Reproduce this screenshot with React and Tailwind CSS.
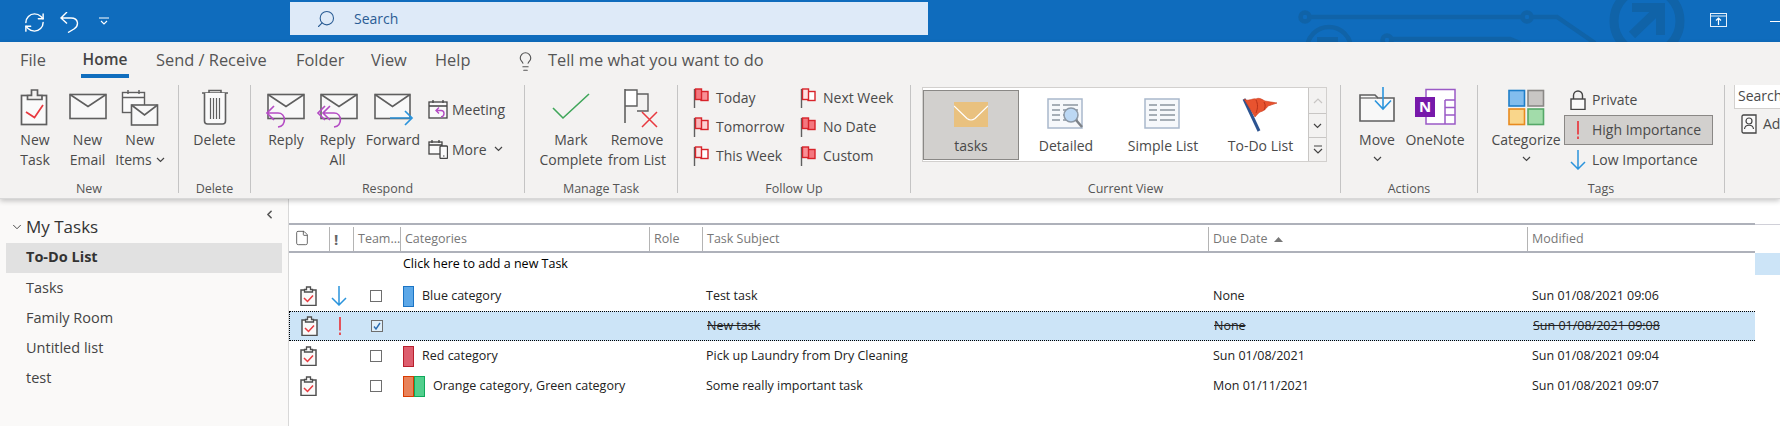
import React from 'react';
import { RefreshCw, Search, Lightbulb, ChevronDown, ChevronLeft, File } from 'lucide-react';

const GREY = '#5f5f5f';
const PURPLE = '#b44cc4';
const BLUE = '#2b94dc';
const RED = '#e8393f';

const Ico = ({ children, w = 44, h = 45 }) => (
  <svg width={w} height={h} viewBox={`0 0 ${w} ${h}`} fill="none" className="shrink-0">{children}</svg>
);

const Env = ({ x = 4, y = 9.5, w = 36, h = 24 }) => (
  <g stroke={GREY} strokeWidth="1.6">
    <rect x={x} y={y} width={w} height={h} fill="#f8f8f8" />
    <path d={`M${x} ${y} L${x + w / 2} ${y + h / 2} L${x + w} ${y}`} />
  </g>
);

const TinyChevron = ({ className = '' }) => (
  <svg width="9" height="6" viewBox="0 0 9 6" fill="none" className={className}>
    <path d="M1 1l3.5 3.5L8 1" stroke="#444" strokeWidth="1.2" />
  </svg>
);

const icons = {
  task: (
    <Ico>
      <rect x="8.500" y="10.500" width="25" height="29" fill="#fafafa" stroke={GREY} strokeWidth="1.7" />
      <path d="M14.500 14.500v-4h4V5h6v5.500h4.500v4z" fill="#f3f2f1" stroke={GREY} strokeWidth="1.7" />
      <path d="M13 27l8.500 5.500L30 20" stroke={RED} strokeWidth="1.7" />
    </Ico>
  ),
  email: <Ico><Env /></Ico>,
  items: (
    <Ico>
      <rect x="4.500" y="7.500" width="22" height="20" fill="#fafafa" stroke={GREY} strokeWidth="1.4" />
      <path d="M4.500 12.500h22M10 5v4M21 5v4" stroke={GREY} strokeWidth="1.4" />
      <Env x={13.5} y={20} w={26} h={20} />
    </Ico>
  ),
  trash: (
    <Ico>
      <path d="M9 8h26M16 8V5.500h12V8" stroke={GREY} strokeWidth="1.6" />
      <path d="M11.500 8v28a3 3 0 0 0 3 3h15a3 3 0 0 0 3-3V8" fill="#fafafa" stroke={GREY} strokeWidth="1.6" />
      <path d="M17.500 13v21M20.500 13v21M23.500 13v21M26.500 13v21" stroke={GREY} strokeWidth="1.2" />
    </Ico>
  ),
  reply: (
    <Ico>
      <Env />
      <path d="M10 21l-7 7 7 7M3 28h11c8 0 9 13 0 14" stroke={PURPLE} strokeWidth="1.7" />
    </Ico>
  ),
  replyAll: (
    <Ico>
      <Env x={5} />
      <path d="M9 21l-7 7 7 7M14 21l-7 7 7 7M7 28h11c8 0 9 13 0 14" stroke={PURPLE} strokeWidth="1.7" />
    </Ico>
  ),
  forward: (
    <Ico>
      <Env w={35} />
      <path d="M19 33h22M34 26l7 7-7 7" stroke={BLUE} strokeWidth="1.7" />
    </Ico>
  ),
  check: <Ico><path d="M4 23l10 10L40 9" stroke="#3fa65a" strokeWidth="1.6" /></Ico>,
  remove: (
    <Ico>
      <path d="M22 9h11v17H22" fill="#f3f2f1" stroke={GREY} strokeWidth="1.4" />
      <path d="M10 5h12v16H10" fill="#fff" stroke={GREY} strokeWidth="1.4" />
      <path d="M10 4v34" stroke={GREY} strokeWidth="1.6" />
      <path d="M27 27l15 15M42 27L27 42" stroke={RED} strokeWidth="1.5" />
    </Ico>
  ),
  move: (
    <Ico>
      <path d="M5 36V10h15l3 3h16v23z" fill="#f8f8f8" stroke={GREY} strokeWidth="1.6" />
      <path d="M5 13h18" stroke={GREY} strokeWidth="1.2" />
      <path d="M28 2v22M20 15.500l8 8.500 8-8.500" stroke={BLUE} strokeWidth="1.6" />
    </Ico>
  ),
  onenote: (
    <Ico>
      <rect x="13" y="4.500" width="29" height="34.500" fill="#fff" stroke="#9a5ac6" strokeWidth="1.5" />
      <path d="M32 15h10M32 22.500h10M32 30h10M32 15v24" stroke="#9a5ac6" strokeWidth="1.5" />
      <rect x="2" y="12" width="20" height="20" fill="#7719aa" />
      <text x="12" y="27" textAnchor="middle" fontSize="15" fontWeight="700" fill="#fff" fontFamily="Open Sans">N</text>
    </Ico>
  ),
  categorize: (
    <Ico>
      <rect x="5" y="5.500" width="15.500" height="15.500" fill="#82bdee" stroke="#1e7ec8" strokeWidth="1.6" />
      <rect x="24" y="5.500" width="15.500" height="15.500" fill="#c8c6c4" stroke="#8a8886" strokeWidth="1.6" />
      <rect x="5" y="24" width="15.500" height="15.500" fill="#f9d68b" stroke="#e88a1e" strokeWidth="1.6" />
      <rect x="24" y="24" width="15.500" height="15.500" fill="#a2dcaa" stroke="#55a868" strokeWidth="1.6" />
    </Ico>
  ),
};

const Meeting = () => (
  <Ico w={20} h={20}>
    <rect x="1" y="3" width="18" height="16" fill="#fafafa" stroke="#444" strokeWidth="1.3" />
    <path d="M1 7h18M5 1v3M15 1v3" stroke="#444" strokeWidth="1.3" />
    <path d="M11 8.500l-3 3 3 3M8 11.500h5c4 0 4 6 0 6.500" stroke={PURPLE} strokeWidth="1.4" />
  </Ico>
);

const More = () => (
  <Ico w={20} h={20}>
    <rect x="1" y="3" width="13" height="12" fill="#fafafa" stroke="#444" strokeWidth="1.3" />
    <path d="M1 6h13M4 1v3M11 1v3" stroke="#444" strokeWidth="1.3" />
    <rect x="12" y="7" width="7.500" height="12.500" rx="1" fill="#fafafa" stroke="#444" strokeWidth="1.3" />
    <path d="M15 17h1.500" stroke="#444" strokeWidth="1.2" />
  </Ico>
);

const Flag = ({ a, b }) => (
  <Ico w={16} h={20}>
    <path d="M1.500 1v19" stroke={GREY} strokeWidth="1.4" />
    <rect x="8" y="3.500" width="7" height="9" fill={b} stroke="#d8232a" strokeWidth="1.4" />
    <rect x="2.500" y="1" width="6" height="10.500" fill={a} stroke="#d8232a" strokeWidth="1.4" />
  </Ico>
);

const Lock = () => (
  <Ico w={16} h={20}>
    <rect x="1" y="9" width="14" height="10.500" fill="#fafafa" stroke="#444" strokeWidth="1.4" />
    <path d="M3.500 9V5.500a4.500 4.500 0 0 1 9 0V9" stroke="#444" strokeWidth="1.4" />
  </Ico>
);

const Bang = () => (
  <Ico w={16} h={20}>
    <path d="M8 1v13.500M8 16.500V19" stroke={RED} strokeWidth="1.7" />
  </Ico>
);

const DownArrow = ({ h = 20 }) => (
  <Ico w={16} h={h}>
    <path d={`M8 0v${h - 1}M1 ${h - 8}l7 7 7-7`} stroke={BLUE} strokeWidth="1.5" />
  </Ico>
);

const BigBtn = ({ icon, lines, w, chevron }) => (
  <div className="flex flex-col items-center shrink-0" style={{ width: w }}>
    {icon}
    {lines.map((l, i) => (
      <div key={i} className="h-[20px] leading-[20px] whitespace-nowrap flex items-center gap-[4px]">
        {l}
        {chevron && i === lines.length - 1 && <TinyChevron />}
      </div>
    ))}
  </div>
);

const Sep = () => <div className="w-px h-[108px] bg-[#c4c4c4] shrink-0" />;

const Group = ({ w, label, children, className = '' }) => (
  <div className="flex flex-col h-[112px] shrink-0" style={{ width: w }}>
    <div className={`flex-1 flex ${className}`}>{children}</div>
    <div className="h-[16px] leading-[16px] text-center text-[12.5px] text-[#555]">{label}</div>
  </div>
);

const FlagRow = ({ a, b, label }) => (
  <div className="h-[26px] flex items-center gap-[7px] whitespace-nowrap">
    <Flag a={a} b={b} />
    <span className="-mt-[2px]">{label}</span>
  </div>
);

const GalleryItem = ({ w, label, selected, children }) => (
  <div
    className={`h-[70px] shrink-0 flex flex-col items-center border ${selected ? 'bg-[#d2d0ce] border-[#8a8886]' : 'border-transparent'}`}
    style={{ width: w }}
  >
    <div className="h-[45px] pt-[3px] flex items-center justify-center">{children}</div>
    <div className="leading-[20px] whitespace-nowrap">{label}</div>
  </div>
);

const Sheet = ({ glass }) => (
  <svg width="38" height="34" viewBox="0 0 38 34" fill="none">
    <rect x="1" y="1" width="34" height="29" fill="#f6f8fb" stroke="#a9b8cc" strokeWidth="1.5" />
    <path d="M5 7h8M16 7h15M5 12h8M16 12h15M5 17h8M16 17h15M5 22h8M16 22h15" stroke="#8c95a0" strokeWidth="1.5" />
    {glass && (
      <>
        <circle cx="24" cy="17" r="7" fill="#bcd8f4" stroke="#8c98a6" strokeWidth="1.5" />
        <path d="M29 22l6 7" stroke="#7d8288" strokeWidth="2.5" />
      </>
    )}
  </svg>
);

const ScrollBtn = ({ h, children }) => (
  <div className="w-[18px] border-l border-[#c8c6c4] bg-[#f3f2f1] flex items-center justify-center" style={{ height: h }}>{children}</div>
);

const Tab = ({ w, ml, children, className = '' }) => (
  <div className={`shrink-0 pt-[6px] whitespace-nowrap ${className}`} style={{ width: w, marginLeft: ml }}>{children}</div>
);

const Ribbon = () => (
  <div className="relative z-10 h-[157px] bg-[#f3f2f1] text-[#4a4a4a] shadow-[0_2px_5px_rgba(0,0,0,0.22)] border-b border-[#d8d8d8]">
    <div className="h-[43px] flex items-start text-[16.4px] text-[#555] pl-[20px]">
      <Tab w={25}>File</Tab>
      <Tab w={48} ml={36} className="h-[36px] text-center border-b-4 border-[#106ebe] font-semibold text-[15.5px] text-[#444]">Home</Tab>
      <Tab w={112} ml={27}>Send / Receive</Tab>
      <Tab w={47} ml={28}>Folder</Tab>
      <Tab w={36} ml={28}>View</Tab>
      <Tab w={35} ml={28}>Help</Tab>
      <div className="ml-[45px] w-[22px] shrink-0 pt-[9px]"><Lightbulb size={21} strokeWidth={1.3} /></div>
      <Tab ml={11}>Tell me what you want to do</Tab>
    </div>

    <div className="flex items-start text-[14px] overflow-hidden">
      <Group w={178} label="New" className="pl-[9px]">
        <BigBtn w={52} icon={icons.task} lines={['New', 'Task']} />
        <BigBtn w={53} icon={icons.email} lines={['New', 'Email']} />
        <BigBtn w={52} icon={icons.items} lines={['New', 'Items']} chevron />
      </Group>
      <Sep />
      <Group w={71} label="Delete" className="justify-center">
        <BigBtn w={56} icon={icons.trash} lines={['Delete']} />
      </Group>
      <Sep />
      <Group w={273} label="Respond" className="pl-[10px]">
        <BigBtn w={50} icon={icons.reply} lines={['Reply']} />
        <BigBtn w={53} icon={icons.replyAll} lines={['Reply', 'All']} />
        <BigBtn w={58} icon={icons.forward} lines={['Forward']} />
        <div className="pl-[6px] flex flex-col gap-[20px] pt-[14px]">
          <div className="h-[20px] flex items-center gap-[4px]"><Meeting />Meeting</div>
          <div className="h-[20px] flex items-center gap-[4px]"><More />More<TinyChevron className="ml-[3px]" /></div>
        </div>
      </Group>
      <Sep />
      <Group w={152} label="Manage Task" className="pl-[13px]">
        <BigBtn w={66} icon={icons.check} lines={['Mark', 'Complete']} />
        <BigBtn w={66} icon={icons.remove} lines={['Remove', 'from List']} />
      </Group>
      <Sep />
      <Group w={232} label="Follow Up" className="pl-[15px]">
        <div className="w-[107px] flex flex-col gap-[3px]">
          <FlagRow a="#f4777f" b="#f98f95" label="Today" />
          <FlagRow a="#fbb4b8" b="#fdd0d2" label="Tomorrow" />
          <FlagRow a="#fde4e5" b="#fff" label="This Week" />
        </div>
        <div className="flex flex-col gap-[3px]">
          <FlagRow a="#fde0e1" b="#fff" label="Next Week" />
          <FlagRow a="#f4777f" b="#f4777f" label="No Date" />
          <FlagRow a="#f98f95" b="#f4777f" label="Custom" />
        </div>
      </Group>
      <Sep />
      <Group w={429} label="Current View" className="pl-[11px] pt-[2px] items-start">
        <div className="w-[405px] h-[75px] bg-white border border-[#d2d0ce] flex items-center">
          <GalleryItem w={96} label="tasks" selected>
            <svg width="34" height="25" viewBox="0 0 34 25" fill="none">
              <rect width="34" height="25" fill="#e9c17f" />
              <path d="M0 4l13 12.500q4 3 8 0L34 4" stroke="#fff" strokeWidth="1.2" />
            </svg>
          </GalleryItem>
          <GalleryItem w={94} label="Detailed"><Sheet glass /></GalleryItem>
          <GalleryItem w={100} label="Simple List"><Sheet /></GalleryItem>
          <GalleryItem w={95} label="To-Do List">
            <svg width="38" height="36" viewBox="0 0 38 36" fill="none">
              <path d="M2 2l15 32" stroke="#2c5390" strokeWidth="3" />
              <path d="M2 2c5 3 8-1 12 0 3-2 7 1 9 2l12 2-9 3c-2 3-4 5-8 6-2 1-3 3-5 5z" fill="#e8532f" stroke="#c93a1d" strokeWidth="0.6" />
              <path d="M14 3c2 4 2 8 0 13M22 5c2 3 1 6 0 8" stroke="#b8321a" strokeWidth="1" />
            </svg>
          </GalleryItem>
          <div className="flex flex-col ml-auto">
            <ScrollBtn h={25}><svg width="10" height="6" viewBox="0 0 10 6" fill="none"><path d="M1 5l4-4 4 4" stroke="#c8c6c4" strokeWidth="1.2" /></svg></ScrollBtn>
            <ScrollBtn h={25}><div className="border-y border-[#c8c6c4] w-full h-full flex items-center justify-center"><TinyChevron /></div></ScrollBtn>
            <ScrollBtn h={23}><svg width="10" height="9" viewBox="0 0 10 9" fill="none"><path d="M1 1h8M1 4l4 4 4-4" stroke="#444" strokeWidth="1.2" /></svg></ScrollBtn>
          </div>
        </div>
      </Group>
      <Sep />
      <Group w={136} label="Actions" className="pl-[7px]">
        <div className="w-[58px] flex flex-col items-center">
          {icons.move}
          <div className="leading-[20px]">Move</div>
          <TinyChevron className="mt-[6px]" />
        </div>
        <BigBtn w={58} icon={icons.onenote} lines={['OneNote']} />
      </Group>
      <Sep />
      <Group w={246} label="Tags" className="pl-[10px]">
        <div className="w-[76px] flex flex-col items-center shrink-0">
          {icons.categorize}
          <div className="leading-[20px]">Categorize</div>
          <TinyChevron className="mt-[6px]" />
        </div>
        <div className="w-[149px] shrink-0 flex flex-col">
          <div className="h-[30px] pl-[6px] flex items-center gap-[6px]"><Lock /><span className="-mt-[2px]">Private</span></div>
          <div className="h-[30px] pl-[5px] flex items-center gap-[6px] bg-[#d2d0ce] border border-[#8a8886]"><Bang /><span className="-mt-[2px]">High Importance</span></div>
          <div className="h-[30px] pl-[6px] flex items-center gap-[6px]"><DownArrow /><span className="-mt-[2px]">Low Importance</span></div>
        </div>
      </Group>
      <Sep />
      <div className="pl-[9px] -mt-[2px] flex flex-col w-[100px] shrink-0 whitespace-nowrap">
        <div className="h-[26px] w-[90px] pl-[3px] bg-white border border-[#d2d0ce] leading-[24px]">Search</div>
        <div className="mt-[4px] flex items-center gap-[6px] pl-[7px]">
          <svg width="16" height="20" viewBox="0 0 16 20" fill="none" className="shrink-0">
            <path d="M1 2.500A1.500 1.500 0 0 1 2.500 1H15v18H2.500A1.500 1.500 0 0 1 1 17.500z" fill="#fafafa" stroke="#444" strokeWidth="1.3" />
            <circle cx="8" cy="7" r="3" stroke="#444" strokeWidth="1.2" />
            <path d="M3.500 15c.5-5 8.500-5 9 0" stroke="#444" strokeWidth="1.2" />
          </svg>
          Address Book
        </div>
      </div>
    </div>
  </div>
);

const TitleBar = () => (
  <div className="relative h-[42px] bg-[#0f6cbd] flex items-start overflow-hidden text-white shrink-0">
    <svg className="absolute left-0 top-0" width="1780" height="42" viewBox="0 0 1780 42" fill="none" stroke="#1063a8">
      <g strokeWidth="4.5">
        <circle cx="1305" cy="17" r="4.5" />
        <circle cx="1527" cy="17" r="4.5" />
        <path d="M1310 17h212M1532 17h25l38 26" />
        <circle cx="1387" cy="40" r="4.5" />
        <path d="M1392 39h118l10 4" />
        <circle cx="1329" cy="49" r="22" />
      </g>
      <rect x="1317" y="37" width="21" height="8" fill="#1063a8" stroke="none" />
      <circle cx="1647" cy="21" r="33" strokeWidth="9" />
      <path d="M1632 7.500h28.500V35M1660 8l-28 27" strokeWidth="9" />
    </svg>
    <RefreshCw size={23} strokeWidth={1.5} className="relative ml-[23px] mt-[11px]" />
    <svg width="20" height="21" viewBox="0 0 20 21" fill="none" className="relative ml-[13px] mt-[12px]">
      <path d="M8 0L2 6l6 5.500M2 6h10c8 0 8 8 3 11l-6 3.500" stroke="#fff" strokeWidth="1.4" />
    </svg>
    <svg width="10" height="9" viewBox="0 0 10 9" fill="none" className="relative ml-[20px] mt-[17px]">
      <path d="M0 1h10M2 4l3 3 3-3" stroke="#fff" strokeWidth="1.1" />
    </svg>
    <div className="relative ml-[181px] mt-[2px] w-[638px] h-[33px] bg-[#deeaf8] flex items-center pl-[26px] text-[#2a5c94]">
      <Search size={20} strokeWidth={1.3} className="-scale-x-100" />
      <span className="ml-[18px] text-[14px]">Search</span>
    </div>
    <svg width="17" height="14" viewBox="0 0 17 14" fill="none" className="relative ml-[782px] mt-[13px]">
      <rect x="0.5" y="0.5" width="16" height="13" stroke="#e6f0fa" />
      <path d="M0 3h17" stroke="#e6f0fa" />
      <path d="M8.500 12V5.500M6 7.500l2.500-2.500L11 7.500" stroke="#fff" strokeWidth="1.2" />
    </svg>
    <div className="relative ml-[43px] mt-[21px] w-[10px] h-px bg-white" />
  </div>
);

const Clip = () => (
  <svg width="17" height="20" viewBox="0 0 17 20" fill="none">
    <rect x="1" y="4" width="15" height="15.500" fill="#fafafa" stroke="#4f4f4f" strokeWidth="1.5" />
    <path d="M4.500 6V3.500h2V1h4v2.500h2V6z" fill="#fafafa" stroke="#4f4f4f" strokeWidth="1.3" />
    <path d="M4 12l3.500 3.500 5.500-6" stroke={RED} strokeWidth="1.5" />
  </svg>
);

const Box = ({ checked }) => (
  <div className="w-[12px] h-[12px] border border-[#6e6e6e] bg-white/40 flex items-center justify-center">
    {checked && (
      <svg width="8" height="8" viewBox="0 0 8 8" fill="none"><path d="M1 4.500l2 2.500 4-6" stroke="#2b6cb0" strokeWidth="1.4" /></svg>
    )}
  </div>
);

const Swatch = ({ bg, border }) => (
  <div className="w-[11px] h-[21px] border" style={{ backgroundColor: bg, borderColor: border }} />
);

const COLS = 'grid grid-cols-[40px_24px_47px_249px_53px_506px_319px_227px]';

const tasks = [
  { imp: 'low', swatches: [['#5ca8e8', '#1b74c4']], cat: 'Blue category', subject: 'Test task', due: 'None', mod: 'Sun 01/08/2021 09:06' },
  { imp: 'high', done: true, swatches: [], cat: '', subject: 'New task', due: 'None', mod: 'Sun 01/08/2021 09:08' },
  { swatches: [['#dd5e6e', '#b81f2c']], cat: 'Red category', subject: 'Pick up Laundry from Dry Cleaning', due: 'Sun 01/08/2021', mod: 'Sun 01/08/2021 09:04' },
  { swatches: [['#e8825a', '#d83b01'], ['#52cf8d', '#10a85a']], cat: 'Orange category, Green category', subject: 'Some really important task', due: 'Mon 01/11/2021', mod: 'Sun 01/08/2021 09:07' },
];

const Head = ({ children, className = '' }) => (
  <div className={`h-[24px] border-l border-[#b4b4b4] pl-[4px] leading-[24px] whitespace-nowrap overflow-hidden ${className}`}>{children}</div>
);

const Row = ({ t }) => (
  <div className={`${COLS} items-center h-[30px] text-[12.5px] text-[#222] ${t.done ? 'bg-[#cce4f7] border-y border-l border-dotted border-black' : ''}`}>
    <div className="pl-[11px] h-[20px]"><Clip /></div>
    <div className="pl-[2px] h-[20px]">
      {t.imp === 'low' && <DownArrow />}
      {t.imp === 'high' && <Bang />}
    </div>
    <div className="pl-[17px]"><Box checked={t.done} /></div>
    <div className="pl-[3px] col-span-2 flex items-center gap-[8px] whitespace-nowrap">
      <div className="flex">{t.swatches.map((s, i) => <Swatch key={i} bg={s[0]} border={s[1]} />)}</div>
      {t.cat}
    </div>
    <div className={`pl-[4px] ${t.done ? 'line-through' : ''}`}>{t.subject}</div>
    <div className={`pl-[5px] ${t.done ? 'line-through' : ''}`}>{t.due}</div>
    <div className={`pl-[5px] ${t.done ? 'line-through' : ''}`}>{t.mod}</div>
  </div>
);

const TaskTable = () => (
  <div className="w-[1466px] shrink-0 pt-[24px] bg-white">
    <div className={`${COLS} h-[30px] pt-[2px] border-t-2 border-b-2 border-[#aeb1ba] text-[12.5px] text-[#777]`}>
      <div className="pl-[5px] pt-[3px]"><File size={16} strokeWidth={1.3} className="text-[#555]" /></div>
      <Head className="font-bold text-[15px] text-[#666]">!</Head>
      <Head className="pl-[2px]">Team...</Head>
      <Head>Categories</Head>
      <Head>Role</Head>
      <Head>Task Subject</Head>
      <Head className="flex items-center gap-[6px]">
        Due Date
        <svg width="9" height="5" viewBox="0 0 9 5"><path d="M4.500 0L9 5H0z" fill="#777" /></svg>
      </Head>
      <Head>Modified</Head>
    </div>
    <div className="h-[28px] text-[12.5px] text-black pl-[114px] pt-[1px] leading-[20px]">Click here to add a new Task</div>
    {tasks.map((t, i) => <Row key={i} t={t} />)}
  </div>
);

const Sidebar = () => (
  <div className="w-[289px] shrink-0 bg-[#faf9f8] border-r border-[#d8d8d8] pt-[13px] text-[14.5px] text-[#444]">
    <div className="h-[30px] flex items-start">
      <div className="flex items-center h-[30px] pl-[10px] gap-[2px] text-[17px] text-[#333]">
        <ChevronDown size={14} strokeWidth={1.5} />
        My Tasks
      </div>
      <ChevronLeft size={13} strokeWidth={3} className="ml-auto mr-[12px] -mt-[4px] text-[#555]" />
    </div>
    <div className="h-[30px] mx-[6px] pl-[20px] leading-[28px] bg-[#e1e1e1] font-bold text-[#333] mt-[1px]">To-Do List</div>
    {['Tasks', 'Family Room', 'Untitled list', 'test'].map((n) => (
      <div key={n} className="h-[30px] pl-[26px] leading-[30px]">{n}</div>
    ))}
  </div>
);

export default function App() {
  return (
    <div className="w-[1780px] h-[426px] overflow-hidden flex flex-col bg-white font-['Open_Sans','Liberation_Sans',sans-serif]">
      <TitleBar />
      <Ribbon />
      <div className="flex flex-1">
        <Sidebar />
        <TaskTable />
        <div className="flex-1 pt-[25px]">
          <div className="h-px bg-[#d0d0d8]" />
          <div className="h-[22px] mt-[28px] bg-[#cce4f7]" />
        </div>
      </div>
    </div>
  );
}
